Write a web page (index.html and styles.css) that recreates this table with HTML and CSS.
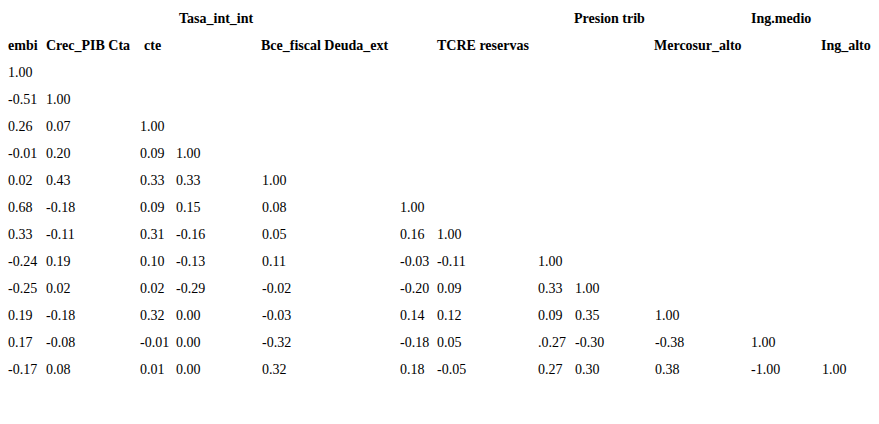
FILE: index.html
```html
<!DOCTYPE html>
<html lang="es">
<head>
<meta charset="utf-8">
<title>Correlaciones</title>
<link rel="stylesheet" href="styles.css">
</head>
<body>
<div class="wrap">
<table class="corr">
<colgroup>
<col class="c1"><col class="c2"><col class="c3"><col class="c4"><col class="c5"><col class="c6">
<col class="c7"><col class="c8"><col class="c9"><col class="c10"><col class="c11"><col class="c12">
</colgroup>
<thead>
<tr>
<th></th><th></th><th></th><th class="ind3">Tasa_int_int</th><th></th><th></th><th></th><th></th><th class="out1">Presion trib</th><th></th><th>Ing.medio</th><th></th>
</tr>
<tr>
<th>embi</th><th>Crec_PIB Cta</th><th class="ind4">cte</th><th></th><th class="out1">Bce_fiscal Deuda_ext</th><th></th><th>TCRE reservas</th><th></th><th></th><th class="out1">Mercosur_alto</th><th></th><th class="out1">Ing_alto</th>
</tr>
</thead>
<tbody>
<tr><td>1.00</td><td></td><td></td><td></td><td></td><td></td><td></td><td></td><td></td><td></td><td></td><td></td></tr>
<tr><td>-0.51</td><td>1.00</td><td></td><td></td><td></td><td></td><td></td><td></td><td></td><td></td><td></td><td></td></tr>
<tr><td>0.26</td><td>0.07</td><td>1.00</td><td></td><td></td><td></td><td></td><td></td><td></td><td></td><td></td><td></td></tr>
<tr><td>-0.01</td><td>0.20</td><td>0.09</td><td>1.00</td><td></td><td></td><td></td><td></td><td></td><td></td><td></td><td></td></tr>
<tr><td>0.02</td><td>0.43</td><td>0.33</td><td>0.33</td><td>1.00</td><td></td><td></td><td></td><td></td><td></td><td></td><td></td></tr>
<tr><td>0.68</td><td>-0.18</td><td>0.09</td><td>0.15</td><td>0.08</td><td>1.00</td><td></td><td></td><td></td><td></td><td></td><td></td></tr>
<tr><td>0.33</td><td>-0.11</td><td>0.31</td><td>-0.16</td><td>0.05</td><td>0.16</td><td>1.00</td><td></td><td></td><td></td><td></td><td></td></tr>
<tr><td>-0.24</td><td>0.19</td><td>0.10</td><td>-0.13</td><td>0.11</td><td>-0.03</td><td>-0.11</td><td>1.00</td><td></td><td></td><td></td><td></td></tr>
<tr><td>-0.25</td><td>0.02</td><td>0.02</td><td>-0.29</td><td>-0.02</td><td>-0.20</td><td>0.09</td><td>0.33</td><td>1.00</td><td></td><td></td><td></td></tr>
<tr><td>0.19</td><td>-0.18</td><td>0.32</td><td>0.00</td><td>-0.03</td><td>0.14</td><td>0.12</td><td>0.09</td><td>0.35</td><td>1.00</td><td></td><td></td></tr>
<tr><td>0.17</td><td>-0.08</td><td>-0.01</td><td>0.00</td><td>-0.32</td><td>-0.18</td><td>0.05</td><td>.0.27</td><td>-0.30</td><td>-0.38</td><td>1.00</td><td></td></tr>
<tr><td>-0.17</td><td>0.08</td><td>0.01</td><td>0.00</td><td>0.32</td><td>0.18</td><td>-0.05</td><td>0.27</td><td>0.30</td><td>0.38</td><td>-1.00</td><td>1.00</td></tr>
</tbody>
</table>
</div>
</body>
</html>
```
FILE: styles.css
```css
html, body {
  margin: 0;
  padding: 0;
  background: #ffffff;
}
.wrap {
  padding: 5px 0 0 8px;
}
.corr {
  table-layout: fixed;
  width: 871px;
  border-collapse: collapse;
  border-spacing: 0;
  font-family: "Liberation Serif", "Times New Roman", serif;
  font-size: 14px;
  color: #000000;
}
.corr th,
.corr td {
  height: 27px;
  padding: 0;
  line-height: 16px;
  text-align: left;
  vertical-align: middle;
  white-space: nowrap;
  overflow: visible;
}
.corr th {
  font-weight: bold;
}
.c1 { width: 38px; }
.c2 { width: 94px; }
.c3 { width: 36px; }
.c4 { width: 86px; }
.c5 { width: 138px; }
.c6 { width: 37px; }
.c7 { width: 101px; }
.c8 { width: 37px; }
.c9 { width: 80px; }
.c10 { width: 96px; }
.c11 { width: 71px; }
.c12 { width: 57px; }
.corr th.ind3 { padding-left: 3px; }
.corr th.ind4 { padding-left: 4px; }
.corr th.out1 { text-indent: -1px; }
```
